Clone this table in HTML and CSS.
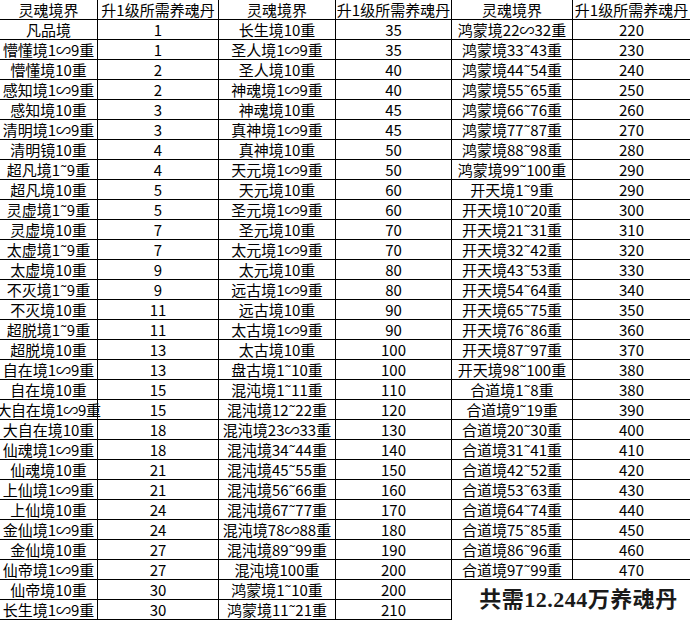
FILE: index.html
```html
<!DOCTYPE html>
<html lang="zh-CN">
<head>
<meta charset="utf-8">
<title>灵魂境界</title>
<link rel="stylesheet" href="styles.css">
</head>
<body>
<div class="sheet">
  <div class="c h">灵魂境界</div><div class="c h">升1级所需养魂丹</div><div class="c h">灵魂境界</div><div class="c h">升1级所需养魂丹</div><div class="c h">灵魂境界</div><div class="c h">升1级所需养魂丹</div>

  <div class="c">凡品境</div><div class="c">1</div><div class="c">长生境10重</div><div class="c">35</div><div class="c">鸿蒙境22∽32重</div><div class="c">220</div>
  <div class="c">懵懂境1∽9重</div><div class="c">1</div><div class="c">圣人境1∽9重</div><div class="c">35</div><div class="c">鸿蒙境33˜43重</div><div class="c">230</div>
  <div class="c">懵懂境10重</div><div class="c">2</div><div class="c">圣人境10重</div><div class="c">40</div><div class="c">鸿蒙境44˜54重</div><div class="c">240</div>
  <div class="c">感知境1∽9重</div><div class="c">2</div><div class="c">神魂境1∽9重</div><div class="c">40</div><div class="c">鸿蒙境55˜65重</div><div class="c">250</div>
  <div class="c">感知境10重</div><div class="c">3</div><div class="c">神魂境10重</div><div class="c">45</div><div class="c">鸿蒙境66˜76重</div><div class="c">260</div>
  <div class="c">清明境1∽9重</div><div class="c">3</div><div class="c">真神境1∽9重</div><div class="c">45</div><div class="c">鸿蒙境77˜87重</div><div class="c">270</div>
  <div class="c">清明镜10重</div><div class="c">4</div><div class="c">真神境10重</div><div class="c">50</div><div class="c">鸿蒙境88˜98重</div><div class="c">280</div>
  <div class="c">超凡境1˜9重</div><div class="c">4</div><div class="c">天元境1∽9重</div><div class="c">50</div><div class="c">鸿蒙境99˜100重</div><div class="c">290</div>
  <div class="c">超凡境10重</div><div class="c">5</div><div class="c">天元境10重</div><div class="c">60</div><div class="c">开天境1˜9重</div><div class="c">290</div>
  <div class="c">灵虚境1˜9重</div><div class="c">5</div><div class="c">圣元境1∽9重</div><div class="c">60</div><div class="c">开天境10˜20重</div><div class="c">300</div>
  <div class="c">灵虚境10重</div><div class="c">7</div><div class="c">圣元境10重</div><div class="c">70</div><div class="c">开天境21˜31重</div><div class="c">310</div>
  <div class="c">太虚境1˜9重</div><div class="c">7</div><div class="c">太元境1∽9重</div><div class="c">70</div><div class="c">开天境32˜42重</div><div class="c">320</div>
  <div class="c">太虚境10重</div><div class="c">9</div><div class="c">太元境10重</div><div class="c">80</div><div class="c">开天境43˜53重</div><div class="c">330</div>
  <div class="c">不灭境1˜9重</div><div class="c">9</div><div class="c">远古境1∽9重</div><div class="c">80</div><div class="c">开天境54˜64重</div><div class="c">340</div>
  <div class="c">不灭境10重</div><div class="c">11</div><div class="c">远古境10重</div><div class="c">90</div><div class="c">开天境65˜75重</div><div class="c">350</div>
  <div class="c">超脱境1˜9重</div><div class="c">11</div><div class="c">太古境1∽9重</div><div class="c">90</div><div class="c">开天境76˜86重</div><div class="c">360</div>
  <div class="c">超脱境10重</div><div class="c">13</div><div class="c">太古境10重</div><div class="c">100</div><div class="c">开天境87˜97重</div><div class="c">370</div>
  <div class="c">自在境1∽9重</div><div class="c">13</div><div class="c">盘古境1˜10重</div><div class="c">100</div><div class="c">开天境98˜100重</div><div class="c">380</div>
  <div class="c">自在境10重</div><div class="c">15</div><div class="c">混沌境1˜11重</div><div class="c">110</div><div class="c">合道境1˜8重</div><div class="c">380</div>
  <div class="c tight">大自在境1∽9重</div><div class="c">15</div><div class="c">混沌境12˜22重</div><div class="c">120</div><div class="c">合道境9˜19重</div><div class="c">390</div>
  <div class="c">大自在境10重</div><div class="c">18</div><div class="c">混沌境23∽33重</div><div class="c">130</div><div class="c">合道境20˜30重</div><div class="c">400</div>
  <div class="c">仙魂境1∽9重</div><div class="c">18</div><div class="c">混沌境34˜44重</div><div class="c">140</div><div class="c">合道境31˜41重</div><div class="c">410</div>
  <div class="c">仙魂境10重</div><div class="c">21</div><div class="c">混沌境45˜55重</div><div class="c">150</div><div class="c">合道境42˜52重</div><div class="c">420</div>
  <div class="c">上仙境1∽9重</div><div class="c">21</div><div class="c">混沌境56˜66重</div><div class="c">160</div><div class="c">合道境53˜63重</div><div class="c">430</div>
  <div class="c">上仙境10重</div><div class="c">24</div><div class="c">混沌境67˜77重</div><div class="c">170</div><div class="c">合道境64˜74重</div><div class="c">440</div>
  <div class="c">金仙境1∽9重</div><div class="c">24</div><div class="c">混沌境78∽88重</div><div class="c">180</div><div class="c">合道境75˜85重</div><div class="c">450</div>
  <div class="c">金仙境10重</div><div class="c">27</div><div class="c">混沌境89˜99重</div><div class="c">190</div><div class="c">合道境86˜96重</div><div class="c">460</div>
  <div class="c">仙帝境1∽9重</div><div class="c">27</div><div class="c">混沌境100重</div><div class="c">200</div><div class="c">合道境97˜99重</div><div class="c">470</div>
  <div class="c">仙帝境10重</div><div class="c">30</div><div class="c">鸿蒙境1˜10重</div><div class="c">200</div>
  <div class="c">长生境1∽9重</div><div class="c">30</div><div class="c">鸿蒙境11˜21重</div><div class="c">210</div>

  <div class="total">共需12.244万养魂丹</div>
</div>
</body>
</html>
```

FILE: styles.css
```css
html, body {
  margin: 0;
  padding: 0;
  background: #ffffff;
  overflow: hidden;
}

.sheet {
  display: grid;
  grid-template-columns: 98px 121px 117px 116px 121px 118px;
  grid-auto-rows: 20px;
  width: 691px;
  font-family: "Noto Sans CJK SC", "Noto Sans", sans-serif;
  font-size: 15px;
  color: #000;
}

.c {
  box-sizing: border-box;
  border-right: 1px solid #000;
  border-bottom: 1px solid #000;
  display: flex;
  align-items: center;
  justify-content: center;
  white-space: nowrap;
  line-height: 19px;
  min-width: 0;
}

.tight {
  letter-spacing: -0.3px;
}

.total {
  grid-column: 5 / 7;
  grid-row: 30 / 32;
  display: flex;
  align-items: center;
  justify-content: center;
  padding: 0 0 6px 14px;
  font-family: "Liberation Serif", "Noto Sans CJK SC", serif;
  font-weight: bold;
  font-size: 22px;
  color: #1a1a1a;
  white-space: nowrap;
  letter-spacing: 0.5px;
}
```
